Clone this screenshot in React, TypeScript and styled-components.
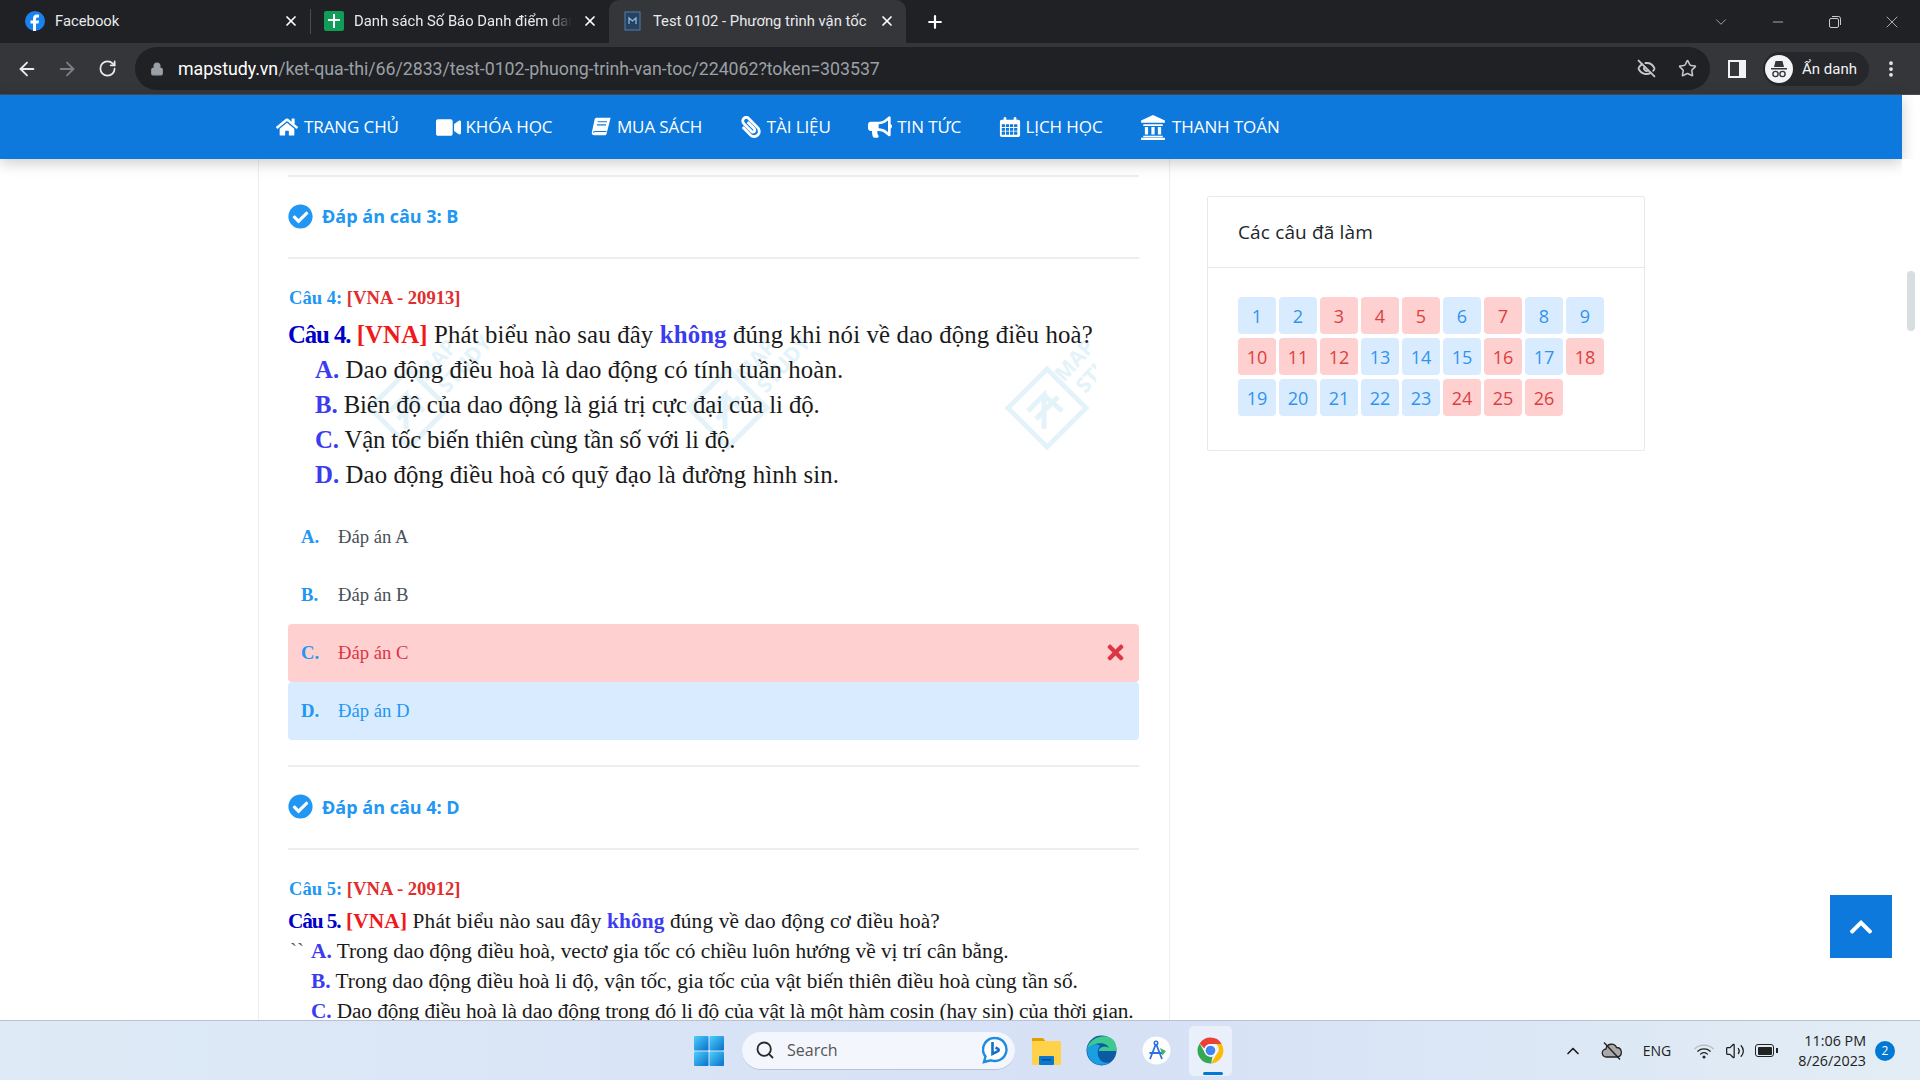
import React from "react";
import styled, { createGlobalStyle } from "styled-components";
import { FaHome, FaVideo, FaPaperclip, FaBullhorn, FaCheckCircle, FaTimes, FaChevronUp } from "react-icons/fa";
import { ArrowLeft, ArrowRight, RotateCw, Lock, EyeOff, Star, ChevronDown, ChevronUp, Minus, X, Plus, MoreVertical, Search, Volume2 } from "lucide-react";

const Global = createGlobalStyle`
  html, body { margin: 0; padding: 0; background: #fff; }
  * { box-sizing: border-box; }
`;

const Screen = styled.div`
  width: 1920px; height: 1080px; display: flex; flex-direction: column; overflow: hidden; position: relative;
  font-family: "Open Sans", sans-serif; background: #fff;
`;

/* Browser chrome */
const TabStrip = styled.div`
  height: 43px; background: #202124; display: flex; align-items: stretch; flex: none; color: #e8eaed;
`;
const Tab = styled.div<{ $w: number; $active?: boolean; $sep?: boolean; $pl: number }>`
  width: ${p => p.$w}px; padding: 0 11px 2px ${p => p.$pl}px; display: flex; align-items: center; gap: 10px;
  background: ${p => (p.$active ? "#35363a" : "transparent")};
  border-radius: ${p => (p.$active ? "10px 10px 0 0" : "0")};
  position: relative; flex: none;
  ${p => p.$sep ? "&::before { content: ''; position: absolute; left: 0; top: 9px; bottom: 9px; width: 1px; background: #4a4c50; }" : ""}
`;
const TabTitle = styled.span<{ $fade?: boolean }>`
  flex: 1; min-width: 0; white-space: nowrap; overflow: hidden; font: 14.8px/20px Roboto, sans-serif; color: #e8eaed;
  ${p => p.$fade ? "mask-image: linear-gradient(90deg, #000 88%, transparent 100%);" : ""}
`;
const TabIcon = styled.svg`flex: none; width: 20px; height: 20px;`;
const NewTab = styled.div`width: 58px; display: flex; align-items: center; justify-content: center; color: #e8eaed;`;
const StripSpacer = styled.div`flex: 1;`;
const WindowButtons = styled.div`display: flex; align-items: center;`;
const WinBtn = styled.div<{ $w?: number }>`
  width: ${p => p.$w ?? 57}px; display: flex; align-items: center; justify-content: center; color: #c8cacd;
`;
const Toolbar = styled.div`
  height: 52px; background: #35363a; display: flex; align-items: center; flex: none; padding-left: 16px; color: #c4c7c5;
  border-bottom: 1px solid #4a4c50;
`;
const NavIcons = styled.div`
  display: flex; gap: 18px; align-items: center; width: 119px; flex: none;
  svg:last-child { margin-left: 2px; }
`;
const UrlPill = styled.div`
  width: 1575px; height: 43px; border-radius: 22px; background: #202124; display: flex; align-items: center; padding: 0 13px 0 15px; flex: none;
`;
const UrlText = styled.div`
  flex: 1; margin-left: 14px; padding-top: 1px; font: 17.8px/22px Roboto, sans-serif; letter-spacing: -0.05px; color: #9aa0a6; white-space: nowrap;
`;
const UrlHost = styled.span`color: #fff;`;
const UrlIcons = styled.div`display: flex; align-items: center; gap: 22px; color: #c4c7c5;`;
const ToolRight = styled.div`display: flex; align-items: center; margin-left: 18px; flex: 1; color: #e8eaed;`;
const PanelIcon = styled.div`
  width: 18px; height: 18px; border: 2px solid #f1f3f4; border-right-width: 7px; flex: none;
`;
const Incognito = styled.div`
  margin-left: 17px; width: 106px; height: 34px; border-radius: 17px; background: #26272a; display: flex; align-items: center; padding-left: 2px; gap: 9px;
  font: 15px/20px Roboto, sans-serif; color: #f1f3f4; flex: none;
`;
const IncognitoFace = styled.svg`width: 28px; height: 28px; flex: none;`;
const MenuDots = styled.div`margin-left: 12px; display: flex; color: #e8eaed;`;

/* Site nav */
const SiteNav = styled.nav`
  height: 64px; width: 1902px; flex: none; background: #0d79dc; color: #fff; display: flex; align-items: center; gap: 37.5px; padding-left: 276px;
  box-shadow: 0 4px 14px rgba(0,0,0,.2); position: relative; z-index: 2;
`;
const NavItem = styled.div<{ $gap: number; $size: number; $flip?: boolean }>`
  display: flex; align-items: center; gap: ${p => p.$gap}px; font: 400 17px/24px "Open Sans", sans-serif; letter-spacing: -0.1px; white-space: nowrap;
  svg { width: ${p => p.$size}px; height: ${p => p.$size}px; flex: none; ${p => p.$flip ? "transform: scaleX(-1);" : ""} }
`;

/* Page */
const PageBody = styled.div`flex: 1; min-height: 0; display: flex; position: relative; overflow: hidden;`;
const ContentColumn = styled.main`
  margin-left: 258px; width: 912px; border-left: 1px solid #eee; border-right: 1px solid #eee; padding: 16px 30px 0 29px; flex: none; overflow: hidden;
`;
const Rule = styled.hr`margin: 0; border: 0; height: 2px; background: #eee;`;
const AnswerLine = styled.div<{ $h?: number }>`
  height: ${p => p.$h ?? 80}px; padding-bottom: 2px; display: flex; align-items: center; gap: 9px; color: #2196f3; font: 700 18px/24px "Open Sans", sans-serif; letter-spacing: 0;
  svg { font-size: 25px; flex: none; }
`;
const QuestionLabel = styled.div<{ $bottom: number }>`
  margin-top: 27px; font: 700 18.6px/24px "Liberation Serif", serif; color: #2196f3; margin-bottom: ${p => p.$bottom}px; padding-left: 1px;
`;
const LabelRef = styled.span`color: #e02d2d;`;
const Question = styled.div<{ $size: number; $lh: number }>`
  position: relative; font: ${p => p.$size}px/${p => p.$lh}px "Liberation Serif", serif; color: #1a1a1a; white-space: nowrap;
`;
const QLine = styled.div<{ $indent?: number; $track?: number }>`
  position: relative; padding-left: ${p => p.$indent ?? 0}px; letter-spacing: ${p => p.$track ?? 0}px;
`;
const QNum = styled.b`color: #0000c8; letter-spacing: -1.1px;`;
const QTag = styled.b`color: #f01818;`;
const QKey = styled.b`color: #3b3bf0;`;
const Backticks = styled.span`position: absolute; left: 2px; color: #555;`;
const Watermark = styled.svg`position: absolute; left: 70px; top: -10px; width: 738px; height: 150px; pointer-events: none;`;
const Options = styled.div`margin-top: 16px; margin-bottom: 25px;`;
const OptionRow = styled.div<{ $state?: "wrong" | "right" }>`
  height: 58px; display: flex; align-items: center; padding: 0 12px 0 13px; border-radius: 4px;
  font: 18.7px/24px "Liberation Serif", serif;
  background: ${p => p.$state === "wrong" ? "#ffd0d0" : p.$state === "right" ? "#d9ecff" : "transparent"};
  color: ${p => p.$state === "wrong" ? "#dc3545" : p.$state === "right" ? "#2196f3" : "#495057"};
`;
const OptionKey = styled.b`width: 37px; color: #2196f3; flex: none;`;
const OptionText = styled.span`flex: 1;`;
const WrongMark = styled.span`
  color: #dc3545; display: flex; font-size: 23px; margin-bottom: 2px;
`;

/* Sidebar */
const Sidebar = styled.aside`padding: 37px 0 0 37px; flex: none;`;
const Card = styled.section`width: 438px; border: 1px solid #e6e8ea; border-radius: 2px;`;
const CardHead = styled.header`
  height: 71px; border-bottom: 1px solid #e6e8ea; display: flex; align-items: center; padding-left: 30px;
  font: 500 19px/24px "Open Sans", sans-serif; color: #212529; letter-spacing: 0.15px;
`;
const CardBody = styled.div`
  padding: 29px 0 34px 30px; display: grid; grid-template-columns: repeat(9, 38px); grid-auto-rows: 37px; column-gap: 3px; row-gap: 4px;
`;
const NumCell = styled.div<{ $wrong?: boolean }>`
  border-radius: 4px; display: flex; align-items: center; justify-content: center; font: 400 18px/24px "Open Sans", sans-serif;
  background: ${p => p.$wrong ? "#ffd0d0" : "#d9ecff"};
  color: ${p => p.$wrong ? "#d9403f" : "#2f93ee"};
`;
const ScrollTrack = styled.div`position: absolute; right: 0; top: 0; width: 18px; height: 100%; z-index: 3; background: #fff;`;
const ScrollThumb = styled.div`position: absolute; left: 5px; top: 112px; width: 8px; height: 60px; border-radius: 4px; background: #d8dde0;`;
const BackTop = styled.div`
  position: absolute; left: 1830px; top: 736px; width: 62px; height: 63px; background: #0d79dc; color: #fff; display: flex; align-items: center; justify-content: center; font-size: 26px; z-index: 4;
`;

/* Taskbar */
const Taskbar = styled.footer`
  height: 60px; flex: none; border-top: 1px solid #b9c2d0; display: flex; align-items: center; position: relative; z-index: 5;
  background: linear-gradient(90deg, #deebf6 0%, #d8e3f6 40%, #d6e1f6 60%, #e2edf5 100%);
`;
const TaskCenter = styled.div`margin-left: 694px; display: flex; align-items: center;`;
const WinLogo = styled.svg`width: 30px; height: 30px; flex: none;`;
const SearchPill = styled.div`
  margin-left: 18px; width: 273px; height: 38px; border-radius: 19px; background: #f3f6fd; border-bottom: 1px solid #b9c2d6; display: flex; align-items: center; padding: 0 7px 0 13px; color: #2b2b2b;
  flex: none;
`;
const SearchLabel = styled.span`flex: 1; margin-left: 12px; font: 16px/20px "Open Sans", sans-serif; color: #555;`;
const TaskIcon = styled.svg<{ $ml: number }>`width: 31px; height: 31px; flex: none; margin-left: ${p => p.$ml}px;`;
const ActiveApp = styled.div`
  margin-left: 17px; width: 43px; height: 50px; border-radius: 5px; background: #eaf0fb; display: flex; align-items: center; justify-content: center; position: relative; flex: none;
  &::after { content: ""; position: absolute; bottom: 1px; left: 14px; width: 20px; height: 3px; border-radius: 2px; background: #0078d4; }
`;
const Tray = styled.div`margin-left: auto; display: flex; align-items: center; color: #1c1c1c; padding-right: 25px;`;
const TrayIcon = styled.span<{ $ml: number }>`display: flex; margin-left: ${p => p.$ml}px;`;
const Lang = styled.span`margin-left: 20px; font: 14px/18px "Open Sans", sans-serif; color: #222;`;
const Clock = styled.div`margin-left: 24px; text-align: right; font: 14.3px/20px "Open Sans", sans-serif; color: #222;`;
const Badge = styled.span`
  margin-left: 9px; width: 20px; height: 20px; border-radius: 50%; background: #0078d4; color: #fff; font: 12px/20px "Open Sans", sans-serif; text-align: center;
`;
const BatteryBody = styled.span`
  width: 19px; height: 13px; border: 1.5px solid #222; border-radius: 3px; padding: 1.5px; display: flex; position: relative;
  &::before { content: ""; flex: 1; background: #222; border-radius: 1px; }
  &::after { content: ""; position: absolute; right: -4.5px; top: 2.5px; width: 2px; height: 5px; background: #222; }
`;

const wrong = new Set([3, 4, 5, 7, 10, 11, 12, 16, 18, 24, 25, 26]);

const WatermarkMark: React.FC<{ x: number }> = ({ x }) => (
  <g transform={`translate(${x} 0)`}>
    <g stroke="#e3f3f9" fill="none">
      <path d="M51 62 L90 101 L51 140 L12 101 Z" strokeWidth="5" />
      <path d="M32 104 L48 88 L48 122 M48 88 L66 104 M40 112 L62 90" strokeWidth="5" />
    </g>
    <g fill="#e3f3f9" fontFamily="Open Sans" fontWeight="700" fontSize="21">
      <text transform="translate(84 58) rotate(-48)" textAnchor="middle">MAP</text>
      <text transform="translate(112 62) rotate(-48)" textAnchor="middle">STUDY</text>
    </g>
  </g>
);

const BookIcon = () => (
  <svg viewBox="0 0 24 24" fill="currentColor">
    <path d="M7 2h15.500L18 19.500c-.3 1-1 1.500-2 1.500H4.500c-1.500 0-3-1.200-2.500-3.300L5 4c.3-1.200 1-2 2-2z" />
    <path d="M8.500 6.200h10M7.500 9.700h10M3.800 18.200c0-.8.600-1.300 1.500-1.300H18" fill="none" stroke="#0d79dc" strokeWidth="1.200" />
  </svg>
);
const CalendarIcon = () => (
  <svg viewBox="0 0 24 24" fill="currentColor">
    <path fillRule="evenodd" d="M3 4h2V2.500a1.500 1.500 0 0 1 3 0V4h8V2.500a1.500 1.500 0 0 1 3 0V4h2a2 2 0 0 1 2 2v15a2 2 0 0 1-2 2H3a2 2 0 0 1-2-2V6a2 2 0 0 1 2-2zM3 9h3.500v3H3zm4.500 0H11v3H7.500zM12 9h3.500v3H12zm4.500 0H20v3h-3.500zM3 13h3.500v3H3zm4.500 0H11v3H7.500zM12 13h3.500v3H12zm4.500 0H20v3h-3.500zM3 17h3.500v3.500H3zm4.500 0H11v3.500H7.500zM12 17h3.500v3.500H12zm4.500 0H20v3.500h-3.500z" />
  </svg>
);
const BankIcon = () => (
  <svg viewBox="0 0 24 24" fill="currentColor">
    <path d="M12 1l11 5v2H1V6z" />
    <path d="M3 9.500h18V11H3zM4.500 12h3v7h-3zM10.500 12h3v7h-3zM16.500 12h3v7h-3zM3 20h18v1.500H3zM1 22h22v2H1z" />
  </svg>
);

export default function App() {
  return (
    <Screen>
      <Global />
      <TabStrip>
        <Tab $w={310} $pl={25}>
          <TabIcon viewBox="0 0 20 20">
            <circle cx="10" cy="10" r="10" fill="#1a82f0" />
            <path d="M11 20v-7.500h2.500l.5-3h-3V8c0-1 .4-1.600 1.700-1.600H14V3.800c-.4-.1-1.200-.2-2-.2-2.400 0-4 1.400-4 4v1.900H5.500v3H8V20z" fill="#fff" />
          </TabIcon>
          <TabTitle>Facebook</TabTitle>
          <X size={16} strokeWidth={2.6} color="#fff" />
        </Tab>
        <Tab $w={299} $pl={14} $sep>
          <TabIcon viewBox="0 0 20 20">
            <rect x="0" width="20" height="20" rx="2" fill="#0f9d58" />
            <path d="M9 3h2v5h5v2h-5v7H9v-7H4V8h5z" fill="#fff" />
          </TabIcon>
          <TabTitle $fade>Danh sách Số Báo Danh điểm danh</TabTitle>
          <X size={16} strokeWidth={2.6} color="#fff" />
        </Tab>
        <Tab $w={297} $pl={14} $active>
          <TabIcon viewBox="0 0 20 20">
            <rect x="2" y="1" width="15" height="18" fill="#27415f" stroke="#4e7eb3" />
            <path d="M6 13V7l3.500 3L13 7v6" fill="none" stroke="#8db6de" strokeWidth="1.300" />
          </TabIcon>
          <TabTitle>Test 0102 - Phương trình vận tốc</TabTitle>
          <X size={16} strokeWidth={2.6} color="#fff" />
        </Tab>
        <NewTab><Plus size={20} strokeWidth={2.6} color="#fff" /></NewTab>
        <StripSpacer />
        <WindowButtons>
          <WinBtn><ChevronDown size={18} strokeWidth={1} /></WinBtn>
          <WinBtn><Minus size={16} strokeWidth={1.2} /></WinBtn>
          <WinBtn>
            <svg width="14" height="14" viewBox="0 0 14 14" fill="none" stroke="currentColor"><rect x="1.500" y="3.500" width="9" height="9" rx="1.500" /><path d="M4 1.500h6.500a2 2 0 0 1 2 2V10" /></svg>
          </WinBtn>
          <WinBtn><X size={20} strokeWidth={1} /></WinBtn>
        </WindowButtons>
      </TabStrip>
      <Toolbar>
        <NavIcons>
          <ArrowLeft size={22} strokeWidth={2} color="#e8eaed" />
          <ArrowRight size={22} strokeWidth={2} color="#7c7f84" />
          <RotateCw size={19} strokeWidth={2.2} color="#e8eaed" />
        </NavIcons>
        <UrlPill>
          <Lock size={14} fill="#9aa0a6" color="#9aa0a6" />
          <UrlText><UrlHost>mapstudy.vn</UrlHost>/ket-qua-thi/66/2833/test-0102-phuong-trinh-van-toc/224062?token=303537</UrlText>
          <UrlIcons>
            <EyeOff size={19} strokeWidth={2.4} />
            <Star size={19} strokeWidth={2} />
          </UrlIcons>
        </UrlPill>
        <ToolRight>
          <PanelIcon />
          <Incognito>
            <IncognitoFace viewBox="0 0 28 28">
              <circle cx="14" cy="14" r="14" fill="#f1f3f4" />
              <path d="M9 12l1.500-6h7l1.500 6z M6 13h16v1.500H6z" fill="#35363a" />
              <circle cx="10.500" cy="19" r="2.600" fill="none" stroke="#35363a" strokeWidth="1.400" />
              <circle cx="17.500" cy="19" r="2.600" fill="none" stroke="#35363a" strokeWidth="1.400" />
            </IncognitoFace>
            Ẩn danh
          </Incognito>
          <MenuDots><MoreVertical size={20} strokeWidth={2.5} /></MenuDots>
        </ToolRight>
      </Toolbar>
      <SiteNav>
        <NavItem $size={22} $gap={6}><FaHome />TRANG CHỦ</NavItem>
        <NavItem $size={25} $gap={4}><FaVideo />KHÓA HỌC</NavItem>
        <NavItem $size={22} $gap={5}><BookIcon />MUA SÁCH</NavItem>
        <NavItem $size={22} $gap={5} $flip><FaPaperclip />TÀI LIỆU</NavItem>
        <NavItem $size={24} $gap={5}><FaBullhorn />TIN TỨC</NavItem>
        <NavItem $size={22} $gap={5}><CalendarIcon />LỊCH HỌC</NavItem>
        <NavItem $size={26} $gap={6}><BankIcon />THANH TOÁN</NavItem>
      </SiteNav>
      <PageBody>
        <ContentColumn>
          <Rule />
          <AnswerLine><FaCheckCircle />Đáp án câu 3: B</AnswerLine>
          <Rule />
          <QuestionLabel $bottom={7}>Câu 4: <LabelRef>[VNA - 20913]</LabelRef></QuestionLabel>
          <Question $size={24.8} $lh={35}>
            <Watermark viewBox="0 0 738 150">
              <WatermarkMark x={0} />
              <WatermarkMark x={319} />
              <WatermarkMark x={638} />
            </Watermark>
            <QLine $track={0.15}><QNum>Câu 4.</QNum> <QTag>[VNA]</QTag> Phát biểu nào sau đây <QKey>không</QKey> đúng khi nói về dao động điều hoà?</QLine>
            <QLine $indent={27} $track={0.08}><QKey>A.</QKey> Dao động điều hoà là dao động có tính tuần hoàn.</QLine>
            <QLine $indent={27} $track={-0.1}><QKey>B.</QKey> Biên độ của dao động là giá trị cực đại của li độ.</QLine>
            <QLine $indent={27} $track={-0.16}><QKey>C.</QKey> Vận tốc biến thiên cùng tần số với li độ.</QLine>
            <QLine $indent={27} $track={0.1}><QKey>D.</QKey> Dao động điều hoà có quỹ đạo là đường hình sin.</QLine>
          </Question>
          <Options>
            <OptionRow><OptionKey>A.</OptionKey><OptionText>Đáp án A</OptionText></OptionRow>
            <OptionRow><OptionKey>B.</OptionKey><OptionText>Đáp án B</OptionText></OptionRow>
            <OptionRow $state="wrong"><OptionKey>C.</OptionKey><OptionText>Đáp án C</OptionText><WrongMark><FaTimes /></WrongMark></OptionRow>
            <OptionRow $state="right"><OptionKey>D.</OptionKey><OptionText>Đáp án D</OptionText></OptionRow>
          </Options>
          <Rule />
          <AnswerLine $h={81}><FaCheckCircle />Đáp án câu 4: D</AnswerLine>
          <Rule />
          <QuestionLabel $bottom={5}>Câu 5: <LabelRef>[VNA - 20912]</LabelRef></QuestionLabel>
          <Question $size={21.3} $lh={30}>
            <QLine $track={0.15}><QNum>Câu 5.</QNum> <QTag>[VNA]</QTag> Phát biểu nào sau đây <QKey>không</QKey> đúng về dao động cơ điều hoà?</QLine>
            <QLine $indent={23}><Backticks>``</Backticks><QKey>A.</QKey> Trong dao động điều hoà, vectơ gia tốc có chiều luôn hướng về vị trí cân bằng.</QLine>
            <QLine $indent={23} $track={0.03}><QKey>B.</QKey> Trong dao động điều hoà li độ, vận tốc, gia tốc của vật biến thiên điều hoà cùng tần số.</QLine>
            <QLine $indent={23} $track={-0.1}><QKey>C.</QKey> Dao động điều hoà là dao động trong đó li độ của vật là một hàm cosin (hay sin) của thời gian.</QLine>
          </Question>
        </ContentColumn>
        <Sidebar>
          <Card>
            <CardHead>Các câu đã làm</CardHead>
            <CardBody>
              {Array.from({ length: 26 }, (_, i) => i + 1).map(n => (
                <NumCell key={n} $wrong={wrong.has(n)}>{n}</NumCell>
              ))}
            </CardBody>
          </Card>
        </Sidebar>
        <ScrollTrack><ScrollThumb /></ScrollTrack>
        <BackTop><FaChevronUp /></BackTop>
      </PageBody>
      <Taskbar>
        <TaskCenter>
          <WinLogo viewBox="0 0 30 30">
            <defs>
              <linearGradient id="win" x1="0" y1="0" x2="1" y2="1">
                <stop offset="0" stopColor="#4cd0fb" />
                <stop offset="1" stopColor="#0a6fc9" />
              </linearGradient>
            </defs>
            <rect x="0" y="0" width="14.500" height="14.500" rx="1" fill="url(#win)" />
            <rect x="15.500" y="0" width="14.500" height="14.500" rx="1" fill="url(#win)" />
            <rect x="0" y="15.500" width="14.500" height="14.500" rx="1" fill="url(#win)" />
            <rect x="15.500" y="15.500" width="14.500" height="14.500" rx="1" fill="url(#win)" />
          </WinLogo>
          <SearchPill>
            <Search size={20} strokeWidth={2.2} />
            <SearchLabel>Search</SearchLabel>
            <svg width="26" height="28" viewBox="0 0 26 28">
              <path d="M13 2a11.500 11.500 0 1 1-4 22.300L2 26l1.500-5.500A11.500 11.500 0 0 1 13 2z" fill="#fff" stroke="#1f8ce0" strokeWidth="2.400" />
              <path d="M10.500 6v12l5.500-2.800c1-.6 1-1.800 0-2.400l-2.500-1.300" fill="none" stroke="#1570c9" strokeWidth="2.600" />
            </svg>
          </SearchPill>
          <TaskIcon $ml={16} viewBox="0 0 31 31">
            <path d="M1 3h11l3 4H1z" fill="#e0a100" />
            <rect x="1" y="6" width="29" height="24" rx="1" fill="#ffd24a" />
            <rect x="8" y="21" width="15" height="9" rx="1" fill="#0a78cf" />
            <rect x="11" y="24" width="9" height="1.500" fill="#0b4e8c" />
          </TaskIcon>
          <TaskIcon $ml={24} viewBox="0 0 31 31">
            <circle cx="15.500" cy="15.500" r="15" fill="#0c5aa6" />
            <path d="M1 14C3 4 16-2 25 3c5 3 6 9 5 13H13c0-5 8-5 10-3C21 7 9 6 1 14z" fill="#3ec98e" />
            <path d="M1 14c3-5 10-6 13-3-3 3-4 12 3 16 2 1 5 1 7 0-7 6-23 3-23-13z" fill="#1a9fe0" />
          </TaskIcon>
          <TaskIcon $ml={24} viewBox="0 0 31 31">
            <circle cx="15.500" cy="15.500" r="14" fill="#fdfdfe" />
            <circle cx="15" cy="8" r="1.800" fill="none" stroke="#2f6fe0" strokeWidth="1.400" />
            <path d="M14.500 10L9 24M15.500 10l5.500 14M8.500 18h13" fill="none" stroke="#2f6fe0" strokeWidth="1.800" />
            <path d="M19 13l6 3-3.500 4.500z" fill="#3db66b" />
          </TaskIcon>
          <ActiveApp>
            <svg width="31" height="31" viewBox="0 0 48 48">
              <path d="M24 4a20 20 0 0 1 17.300 10H24a10 10 0 0 0-9.500 7L7.300 13A20 20 0 0 1 24 4z" fill="#ea4335" />
              <path d="M41.300 14A20 20 0 0 1 25 44l8-14a10 10 0 0 0 0-16z" fill="#fbbc04" />
              <path d="M25 44A20 20 0 0 1 7.300 13L15 27a10 10 0 0 0 12 6.500z" fill="#34a853" />
              <circle cx="24" cy="24" r="9.500" fill="#fff" />
              <circle cx="24" cy="24" r="7.500" fill="#4285f4" />
            </svg>
          </ActiveApp>
        </TaskCenter>
        <Tray>
          <ChevronUp size={20} strokeWidth={2} />
          <TrayIcon $ml={18}>
            <svg width="22" height="20" viewBox="0 0 22 20">
              <path d="M5.500 16a4 4 0 0 1-.5-8 5.500 5.500 0 0 1 10.500-1.500A4.800 4.800 0 0 1 16.500 16z" fill="#a9a9a9" stroke="#222" strokeWidth="1.300" />
              <path d="M3 1.500L19 18.500" stroke="#222" strokeWidth="1.400" />
            </svg>
          </TrayIcon>
          <Lang>ENG</Lang>
          <TrayIcon $ml={23}>
            <svg width="20" height="16" viewBox="0 0 20 16" fill="none" strokeLinecap="round">
              <path d="M1 5.500c5-4.500 13-4.500 18 0" stroke="#b5b8bd" strokeWidth="1.300" />
              <path d="M3.800 8.200c3.500-3 8.900-3 12.400 0M6.700 11c1.900-1.500 4.700-1.500 6.600 0" stroke="#222" strokeWidth="1.300" />
              <circle cx="10" cy="14" r="1.500" fill="#222" />
            </svg>
          </TrayIcon>
          <TrayIcon $ml={11}><Volume2 size={20} strokeWidth={1.5} /></TrayIcon>
          <TrayIcon $ml={10}><BatteryBody /></TrayIcon>
          <Clock>11:06 PM<br />8/26/2023</Clock>
          <Badge>2</Badge>
        </Tray>
      </Taskbar>
    </Screen>
  );
}
